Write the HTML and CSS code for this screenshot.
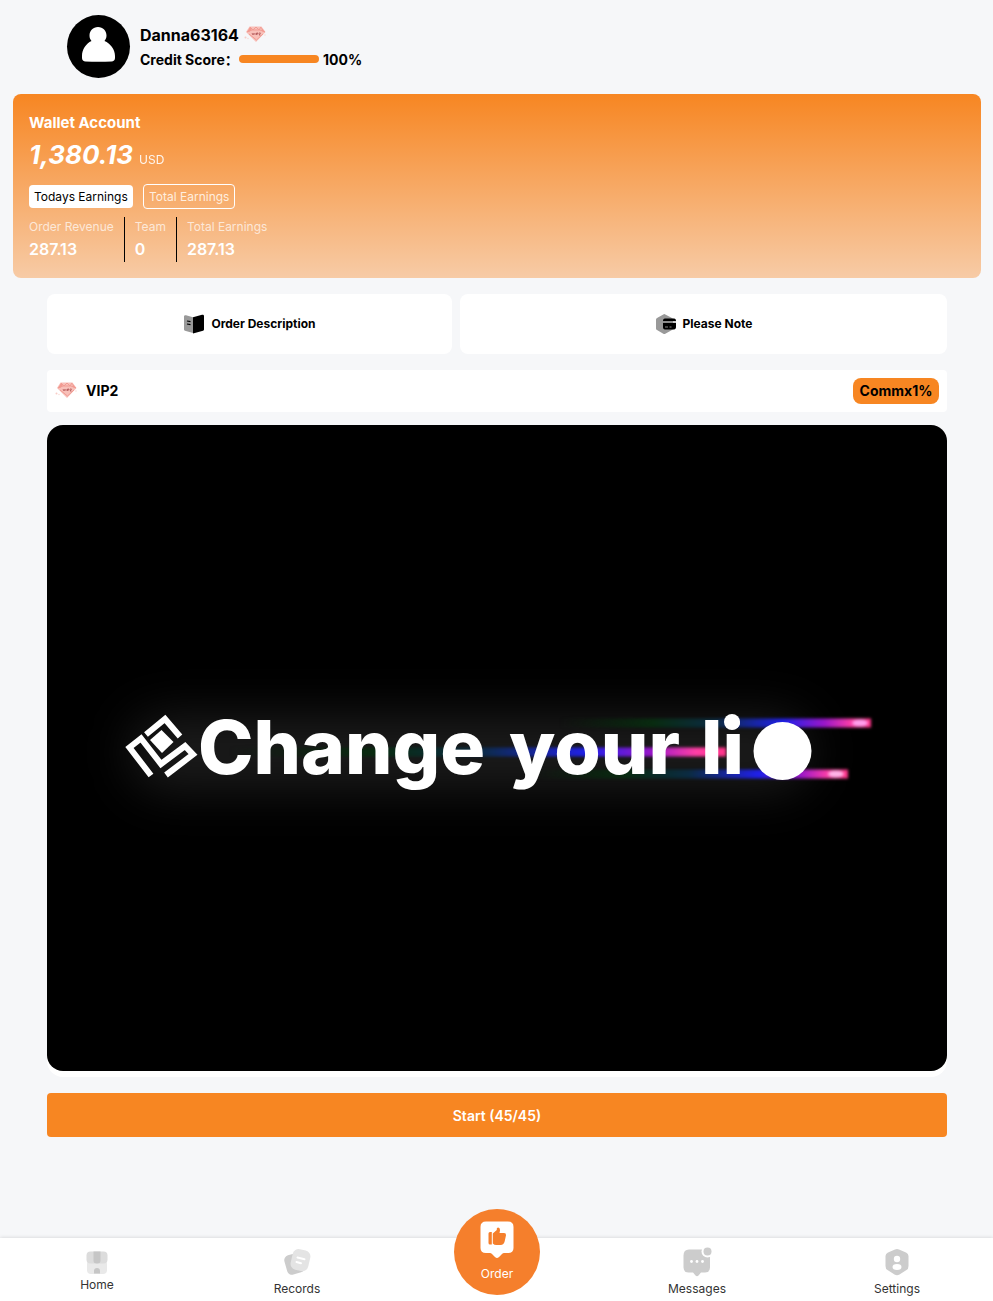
FILE: index.html
```html
<!DOCTYPE html>
<html lang="en">
<head>
<meta charset="utf-8">
<title>Order</title>
<link rel="stylesheet" href="styles.css">
</head>
<body>
<svg class="defs" width="0" height="0" aria-hidden="true">
  <symbol id="gem" viewBox="0 0 24 20">
    <path d="M6.500 2.500h12l4 5.500-9.500 10L3 8z" fill="#f8c0b9"/>
    <path d="M7 3l3 3 3-3 3 3 2-3M4 8l5-2h8l5 2M6 10l7.500 6L20 10" fill="none" stroke="#f09b93" stroke-width="1"/>
    <path d="M7 3l2 2-3 3H4zM18 3l4 5-3-1z" fill="#f29a91"/>
    <path d="M9 9l1 2 1-2M12 9v2M13.500 11V9h1.500v1h-1.500M16 9h1.500l-1.500 2h1.500" fill="none" stroke="#a9484a" stroke-width=".7"/>
    <circle cx="2.500" cy="13.500" r="1" fill="#f8cbc5"/><circle cx="5" cy="14.500" r=".7" fill="#f8d5d0"/><circle cx="22" cy="11" r=".7" fill="#f8d5d0"/>
  </symbol>
</svg>
<header class="profile">
  <svg class="avatar" viewBox="0 0 63 63"><circle cx="31.500" cy="31.500" r="31.500"/><path fill="#fff" d="M31 12c5 0 8.500 3.700 8.500 8.500 0 2.300-.8 4.100-2 5.500C43.500 28.500 48 34.500 48 41v2c0 2-1.500 3.500-3.500 3.500-8 .4-18 .4-26 0-2 0-3.500-1.500-3.500-3.500v-2c0-6.500 4-12.500 9.500-15-1.300-1.400-2-3.200-2-5.500C22.500 15.700 26 12 31 12z"/></svg>
  <div class="identity">
    <div class="name"><span class="name-text">Danna63164</span><svg class="gem"><use href="#gem"/></svg></div>
    <div class="credit"><span class="credit-label">Credit Score：</span><span class="meter"></span><span>100%</span></div>
  </div>
</header>
<section class="wallet">
  <div class="wallet-title">Wallet Account</div>
  <div class="balance"><span class="amount">1,380.13</span><span class="unit">USD</span></div>
  <div class="tabs"><span class="tab tab-on">Todays Earnings</span><span class="tab tab-off">Total Earnings</span></div>
  <div class="stats">
    <div class="stat"><span>Order Revenue</span><b>287.13</b></div>
    <div class="stat"><span>Team</span><b>0</b></div>
    <div class="stat"><span>Total Earnings</span><b>287.13</b></div>
  </div>
</section>
<main class="content">
  <div class="links">
    <div class="link"><svg width="22" height="20" viewBox="0 0 22 20"><path fill="#999" d="M1 2.500C1 1.500 2 1 3 1.200l7 2V19l-8-2.300c-.7-.2-1-.6-1-1.300z"/><path d="M10 3.200l9-2.400c1-.2 2 .2 2 1.300v13.500c0 .6-.4 1-1 1.200L10 19.600z"/><path d="M4 7l3.500.6M4 10l3.500.6" stroke="#000" stroke-width="1.200"/></svg><span>Order Description</span></div>
    <div class="link"><svg width="22" height="20" viewBox="0 0 22 20"><path fill="#999" d="M8.300.4q1-.6 2 0l6.700 3.500q1 .6 1 1.700v8.800q0 1-1 1.600l-6.700 3.700q-1 .6-2 0L2 16q-1-.6-1-1.600V5.600q0-1.100 1-1.700z"/><path d="M10 4.500h9c1.500 0 2 1 2 2.500H8c0-1.500.5-2.500 2-2.500zM8 9h13v4c0 1.500-.7 2.500-2 2.500h-9c-1.500 0-2-1-2-2.500z"/><path d="M8 8h13" stroke="#777" stroke-width=".8"/><path d="M10 13h3M14.500 13h2" stroke="#aaa" stroke-width=".8"/></svg><span>Please Note</span></div>
  </div>
  <div class="level"><svg class="gem"><use href="#gem"/></svg><span class="level-name">VIP2</span><span class="rate">Commx1%</span></div>
  <div class="video">
    <svg class="frame" viewBox="47 425 900 646">
      <defs>
        <linearGradient id="trail"><stop offset="0" stop-color="#08230b" stop-opacity="0"/><stop offset=".3" stop-color="#082b10"/><stop offset=".5" stop-color="#0b2b42"/><stop offset=".72" stop-color="#2020e8"/><stop offset=".85" stop-color="#9916c9"/><stop offset=".94" stop-color="#ff3fa5"/><stop offset="1" stop-color="#ff3488"/></linearGradient>
        <filter id="soft" x="-5%" y="-30%" width="110%" height="160%" color-interpolation-filters="sRGB"><feGaussianBlur stdDeviation="1.500"/></filter>
        <filter id="edge" color-interpolation-filters="sRGB"><feGaussianBlur stdDeviation=".5"/></filter>
        <filter id="glow" x="-30%" y="-150%" width="160%" height="400%" color-interpolation-filters="sRGB"><feGaussianBlur stdDeviation="24"/></filter>
      </defs>
      <rect x="47" y="425" width="900" height="646" fill="#000"/>
      <rect x="130" y="715" width="680" height="75" rx="35" fill="#1b1b1b" filter="url(#glow)"/>
      <g filter="url(#soft)">
        <rect x="560" y="718.500" width="311" height="9" fill="url(#trail)"/>
        <rect x="230" y="747.500" width="496" height="9" fill="url(#trail)"/>
        <rect x="530" y="769.500" width="318" height="9" fill="url(#trail)"/>
        <ellipse cx="860" cy="723" rx="8" ry="3.500" fill="#ffa0ed"/>
        <ellipse cx="836" cy="774" rx="8" ry="3.500" fill="#ffb5e8"/>
      </g>
      <g class="slogan" filter="url(#edge)">
        <g fill="none" stroke="#fff" stroke-width="6"><path d="M146 734.500l19-15.500 15 17.500M151 775.500l-21.500-28 11.500-9 20 25.500 24-18 8 8.500-27 20.500"/></g>
        <path d="M161.500 730l12 12-11.500 11-12-13z"/>
        <text x="198" y="774" textLength="287" lengthAdjust="spacingAndGlyphs">Change</text>
        <text x="509" y="774" textLength="171" lengthAdjust="spacingAndGlyphs">your</text>
        <text x="701" y="774" textLength="43" lengthAdjust="spacingAndGlyphs">li</text>
        <circle cx="732" cy="722" r="8"/>
        <circle cx="782.500" cy="751" r="29"/>
      </g>
    </svg>
  </div>
  <div class="start">Start (45/45)</div>
</main>
<nav class="nav">
  <div class="nav-item nav-home"><svg viewBox="0 0 28 28"><rect x="4" y="12" width="20" height="14" rx="4" fill="#e9e9e9"/><rect x="3.500" y="3.500" width="21" height="12" rx="4" fill="#dcdcdc"/><path fill="#c6c6c6" d="M10.500 3.500h7V13q0 2.500-3.500 2.500T10.500 13zM11 25.500V23q0-3 3-3t3 3v2.500z"/></svg>Home</div>
  <div class="nav-item"><svg viewBox="0 0 28 28"><rect x="2.500" y="6" width="18" height="20" rx="5" fill="#ccc" transform="rotate(-16 11 16)"/><rect x="8.500" y="1.500" width="18" height="21" rx="6" fill="#e4e4e4" transform="rotate(13 17 12)"/><path d="M14.500 9.500l7 1.800M13.500 14l4.500 1.200" stroke="#fff" stroke-width="2" stroke-linecap="round"/></svg>Records</div>
  <div class="nav-item nav-order"><div class="order-disc"><svg viewBox="0 0 34 38"><path fill="#fff" d="M6 .5h22q5.500 0 5.500 5.500v21q0 5-5.500 5h-4q-1 0-2 1l-3 3q-2 2-4 0l-3-3q-1-1-2-1H6q-5.500 0-5.500-5V6Q.5.500 6 .5z"/><path fill="#f57f2c" d="M8.500 12.500q0-1.500 1.500-1.500h1.800v12.500H10q-1.500 0-1.500-1.500zM12.800 12.500l4-3.500V7.500q.5-1 1.500-1 2 .5 1.700 3L19.500 12H24q2.300 0 2 2.300l-1.300 6q-.7 3.700-4.200 3.700h-4.200q-2 0-3.500-1.500z"/></svg><span>Order</span></div></div>
  <div class="nav-item"><svg viewBox="0 0 28 28"><path fill="#ccc" d="M6 1.500h16q5 0 5 5v13q0 5-5 5h-4l-2.500 3q-1.500 1.500-3 0l-2.500-3H5.500q-5 0-5-5v-12q0-6 5.500-6z"/><circle cx="24.500" cy="3.500" r="6" fill="#fff"/><circle cx="24.500" cy="3.500" r="4" fill="#ccc"/><g fill="#fff"><circle cx="8.500" cy="13.500" r="1.400"/><circle cx="14" cy="13.500" r="1.400"/><circle cx="19.500" cy="13.500" r="1.400"/></g></svg>Messages</div>
  <div class="nav-item"><svg viewBox="0 0 28 28"><path fill="#ccc" d="M12 1.500q2-1 4 0l7 3q2.500 1 2.500 3.500v10q0 3-2 4l-7 4.500q-2.500 1.500-5 0L4.500 22q-2-1-2-4V8q0-2.500 2.500-3.500z"/><g fill="#fff"><circle cx="14" cy="11" r="3.200"/><ellipse cx="14" cy="19" rx="4.500" ry="3"/></g></svg>Settings</div>
</nav>
</body>
</html>
```
FILE: styles.css
```css
* { box-sizing: border-box; }
body {
  margin: 0;
  height: 1301px;
  display: flex;
  flex-direction: column;
  overflow: hidden;
  background: #f6f7f9;
  color: #000;
  font-family: Inter, "Noto Sans CJK SC", sans-serif;
  font-size: 12px;
}
.defs { display: block; height: 0; flex: none; }
svg { display: block; flex: none; overflow: visible; }
.profile { display: flex; gap: 10px; height: 94px; padding: 15px 67px 0; }
.avatar { width: 63px; height: 63px; }
.name { display: flex; align-items: center; height: 25px; margin-top: 8px; font-size: 16px; font-weight: 700; line-height: 25px; }
.name-text { width: 103px; }
.gem { width: 24px; height: 20px; }
.name .gem { margin-top: -3px; }
.credit { display: flex; align-items: center; height: 24px; font-size: 14px; font-weight: 700; line-height: 24px; }
.credit-label { width: 99px; white-space: nowrap; }
.meter { width: 80px; height: 8px; margin: -2px 4px 0 0; border-radius: 4px; background: #f78622; }
.wallet {
  height: 184px;
  margin: 0 12px 0 13px;
  padding: 18px 16px 0;
  border-radius: 8px;
  background: linear-gradient(#f78622, #f7cba6);
  color: #fff;
}
.wallet-title { height: 21px; line-height: 21px; font-size: 15px; font-weight: 700; }
.balance { display: flex; align-items: baseline; gap: 6px; height: 44px; line-height: 44px; }
.amount { font-size: 26px; font-style: italic; font-weight: 700; }
.unit { opacity: .9; }
.tabs { display: flex; align-items: center; gap: 10px; height: 26px; margin-top: 6px; }
.tab { border-radius: 4px; line-height: 23px; }
.tab-on { width: 104px; height: 23px; padding: 0 5px; background: #fff; color: #000; white-space: nowrap; }
.tab-off { width: 92px; height: 25px; padding: 0 5px; border: 1px solid #fff; color: #ffeedf; white-space: nowrap; }
.stats { display: flex; margin-top: 8px; height: 45px; }
.stat { padding-right: 10px; margin-right: 10px; border-right: 1px solid #000; }
.stat:last-child { border: 0; }
.stat span { display: block; height: 20px; line-height: 20px; color: rgba(255, 255, 255, .7); }
.stat b { display: block; height: 25px; line-height: 25px; font-size: 16px; font-weight: 600; }
.content { width: 900px; margin: 16px 0 0 47px; flex: 1; }
.links { display: grid; grid-template-columns: 405px 487px; gap: 8px; height: 60px; }
.link { display: flex; align-items: center; justify-content: center; gap: 6px; border-radius: 8px; background: #fff; font-weight: 700; }
.link span { padding-bottom: 2px; }
.level { display: flex; align-items: center; height: 42px; margin-top: 16px; padding: 0 8px 0 7px; border-radius: 4px; background: #fff; font-size: 14px; font-weight: 700; }
.level .gem { margin: -2px 8px 0 0; }
.level-name { padding-bottom: 2px; }
.rate { width: 86px; height: 26px; margin-left: auto; border-radius: 8px; background: #f78622; line-height: 26px; text-align: center; }
.video { height: 652px; margin-top: 13px; border-radius: 16px; background: #fff; }
.frame { width: 900px; height: 646px; border-radius: 16px; overflow: hidden; }
.slogan { fill: #fff; font-family: Inter, sans-serif; font-size: 74px; font-weight: 800; }
.start { height: 44px; margin-top: 16px; border-radius: 4px; background: #f78622; color: #fff; line-height: 45px; font-size: 14px; font-weight: 600; text-align: center; }
.nav { display: flex; justify-content: center; height: 63px; padding-left: 1px; background: #fff; box-shadow: 0 0 4px rgba(0, 0, 0, .16); color: #333; }
.nav-item { display: flex; flex: 0 0 200px; flex-direction: column; align-items: center; gap: 5px; padding-top: 10px; line-height: 16px; }
.nav-item svg { width: 28px; height: 28px; }
.nav-home { gap: 1px; }
.order-disc { display: flex; flex-direction: column; align-items: center; flex: none; width: 86px; height: 86px; margin-top: -39px; padding-top: 12px; border-radius: 50%; background: #f57f2c; color: #fff; }
.nav-order .order-disc svg { width: 34px; height: 38px; }
.order-disc span { margin-top: 7px; }
```
